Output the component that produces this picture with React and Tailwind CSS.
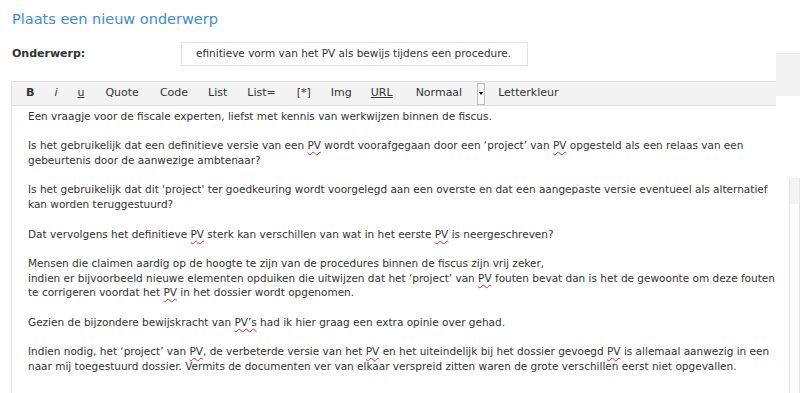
import React from 'react';

const PV = ({ children = 'PV' }) => (
  <span className="underline decoration-wavy decoration-[#e53030] decoration-1 underline-offset-2">{children}</span>
);

const Blank = () => <div className="h-[14.7px]" />;

const App = () => {
  return (
    <div
      className="w-[800px] h-[393px] overflow-hidden bg-white flex text-[#333]"
      style={{ fontFamily: '"DejaVu Sans", Verdana, sans-serif' }}
    >
      <div className="w-[776px] flex flex-col shrink-0">
        <div className="pl-[12px] pt-[9px] text-[14.5px] leading-[20px] text-[#3d8cd8]">Plaats een nieuw onderwerp</div>

        <div className="flex items-center pl-[12px] mt-[13px] h-[24px]">
          <div className="w-[169px] text-[11px] font-bold text-[#333]">Onderwerp:</div>
          <div className="w-[347px] h-[24px] border border-[#e3e3e3] flex items-center pl-[14px] text-[10.5px] text-[#333] overflow-hidden whitespace-nowrap">
            efinitieve vorm van het PV als bewijs tijdens een procedure.
          </div>
        </div>

        <div className="ml-[11px] mt-[15px] flex flex-col grow border-l border-[#e2e2e2]">
          <div className="h-[25px] bg-[#f3f3f3] border-t border-b border-[#e0e0e0] flex items-center pl-[4px] text-[11px] text-[#333]">
            <span className="px-[10px] font-bold">B</span>
            <span className="px-[10px] italic">i</span>
            <span className="px-[10px] underline">u</span>
            <span className="pl-[11px] pr-[10px]">Quote</span>
            <span className="px-[11px]">Code</span>
            <span className="pl-[9px] pr-[10px]">List</span>
            <span className="pl-[10px] pr-[11px]">List=</span>
            <span className="pl-[10px] pr-[10px]">[*]</span>
            <span className="pl-[10px] pr-[10px]">Img</span>
            <span className="pl-[9px] pr-[10px] underline">URL</span>
            <span className="pl-[13px] pr-[15px]">Normaal</span>
            <span className="w-[8px] h-[22px] border border-[#bbb] bg-[#f7f7f7] flex items-center justify-center">
              <span className="w-0 h-0 border-l-[2px] border-r-[2px] border-t-[3px] border-l-transparent border-r-transparent border-t-black" />
            </span>
            <span className="pl-[13px]">Letterkleur</span>
          </div>

          <div className="pl-[16px] pt-[3px] text-[10.5px] leading-[14.7px] text-[#333] whitespace-nowrap">
            <div>Een vraagje voor de fiscale experten, liefst met kennis van werkwijzen binnen de fiscus.</div>
            <Blank />
            <div>Is het gebruikelijk dat een definitieve versie van een <PV /> wordt voorafgegaan door een ‘project’ van <PV /> opgesteld als een relaas van een</div>
            <div>gebeurtenis door de aanwezige ambtenaar?</div>
            <Blank />
            <div>Is het gebruikelijk dat dit 'project' ter goedkeuring wordt voorgelegd aan een overste en dat een aangepaste versie eventueel als alternatief</div>
            <div>kan worden teruggestuurd?</div>
            <Blank />
            <div>Dat vervolgens het definitieve <PV /> sterk kan verschillen van wat in het eerste <PV /> is neergeschreven?</div>
            <Blank />
            <div>Mensen die claimen aardig op de hoogte te zijn van de procedures binnen de fiscus zijn vrij zeker,</div>
            <div>indien er bijvoorbeeld nieuwe elementen opduiken die uitwijzen dat het ‘project’ van <PV /> fouten bevat dan is het de gewoonte om deze fouten</div>
            <div>te corrigeren voordat het <PV /> in het dossier wordt opgenomen.</div>
            <Blank />
            <div>Gezien de bijzondere bewijskracht van <PV>PV’s</PV> had ik hier graag een extra opinie over gehad.</div>
            <Blank />
            <div>Indien nodig, het ‘project’ van <PV />, de verbeterde versie van het <PV /> en het uiteindelijk bij het dossier gevoegd <PV /> is allemaal aanwezig in een</div>
            <div>naar mij toegestuurd dossier. Vermits de documenten ver van elkaar verspreid zitten waren de grote verschillen eerst niet opgevallen.</div>
          </div>
        </div>
      </div>

      <div className="flex-1 flex flex-col">
        <div className="mt-[53px] h-[43px] bg-[#f3f3f3] border-t border-[#ececec]" />
        <div className="mt-[82px] ml-[13px] grow border-l border-r border-[#e6e6e6]">
          <div className="h-[26px] bg-[#f3f3f3]" />
        </div>
      </div>
    </div>
  );
};

export default App;
